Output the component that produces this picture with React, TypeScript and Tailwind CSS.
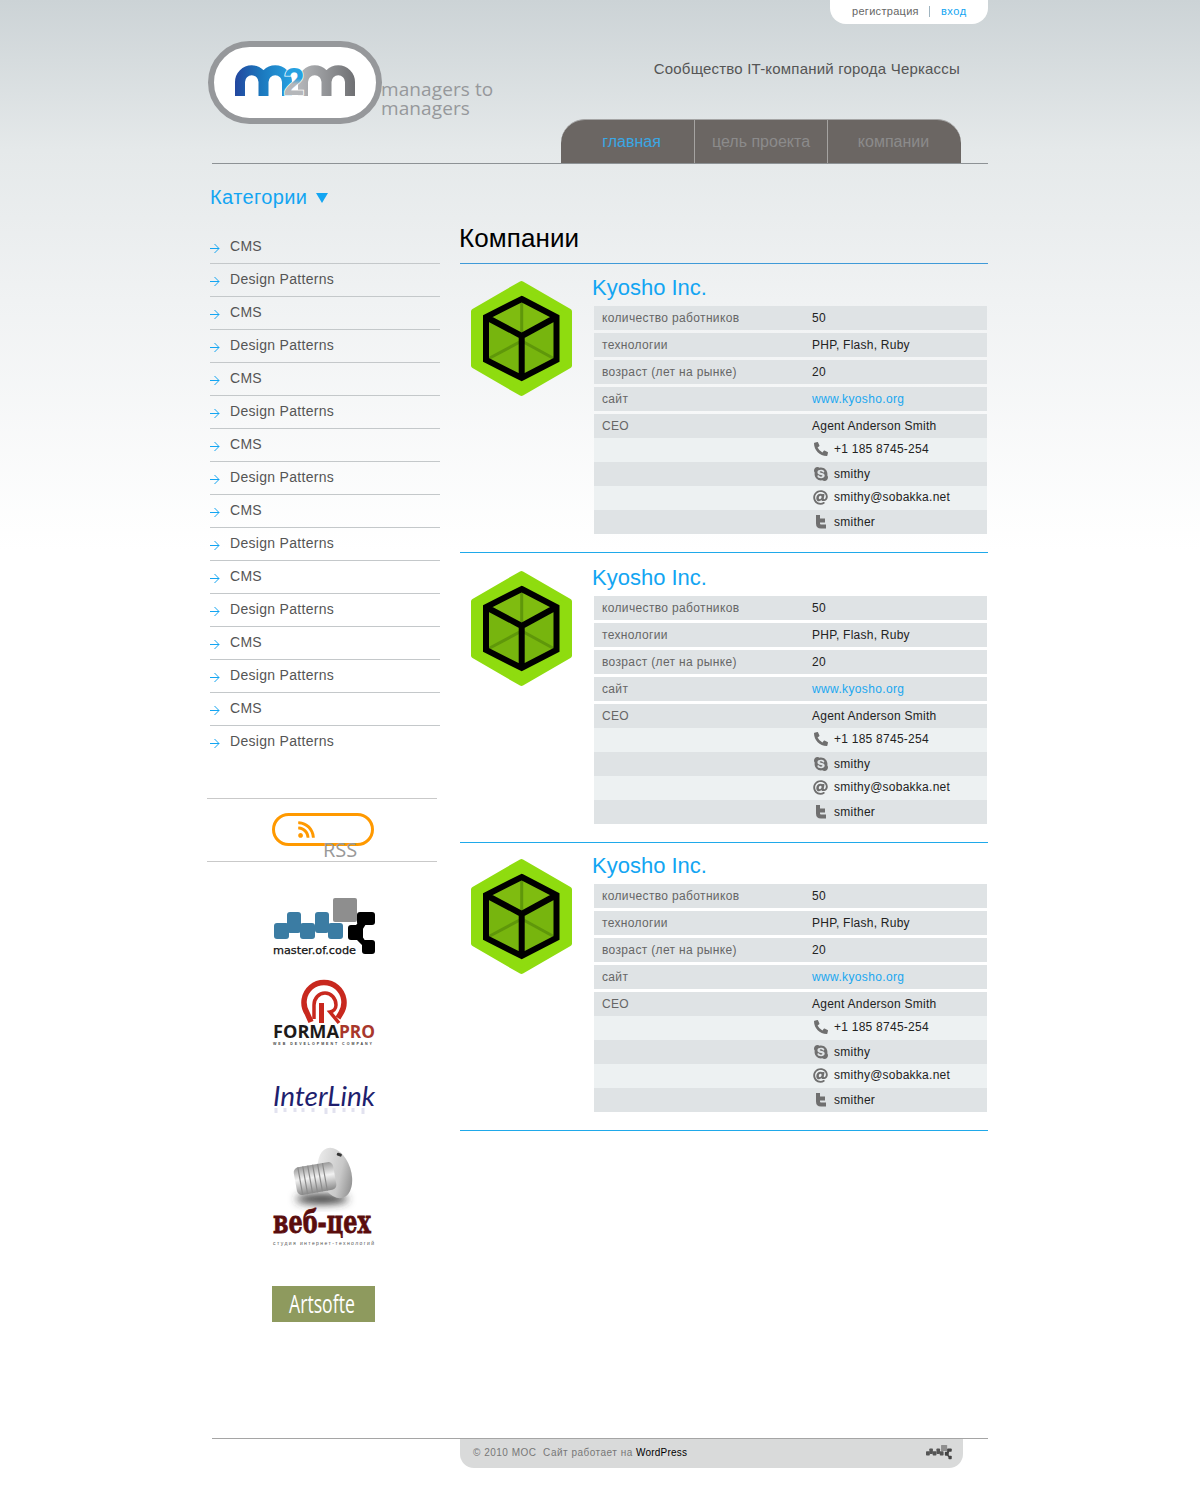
import { FaAt, FaPhoneAlt, FaRss, FaSkype } from "react-icons/fa";

const font = "font-['Liberation_Sans',Arial,sans-serif]";
const categories = Array.from({ length: 16 }, (_, i) => (i % 2 === 0 ? "CMS" : "Design Patterns"));

const M2mLogo = () => (
    <svg className="block" width="174" height="83" viewBox="208 41 174 83">
        <defs>
            <linearGradient id="m1" x1="235" x2="292" y1="0" y2="0" gradientUnits="userSpaceOnUse">
                <stop offset="0" stopColor="#23479f" />
                <stop offset="0.45" stopColor="#1b77bd" />
                <stop offset="1" stopColor="#27a0e0" />
            </linearGradient>
            <linearGradient id="m2" x1="298" x2="355" y1="0" y2="0" gradientUnits="userSpaceOnUse">
                <stop offset="0" stopColor="#b5b7ba" />
                <stop offset="1" stopColor="#6f7073" />
            </linearGradient>
            <linearGradient id="two" x1="0" x2="0" y1="0" y2="1">
                <stop offset="0.42" stopColor="#27a0e0" />
                <stop offset="0.55" stopColor="#b5b7ba" />
            </linearGradient>
        </defs>
        <rect x="211" y="44" width="168" height="77" rx="38.5" fill="#fff" stroke="#96989b" strokeWidth="6" />
        <path d="M240 96V82A11.75 11.75 0 0 1 263.5 82V96M263.5 82A11.75 11.75 0 0 1 287 82V96" fill="none" stroke="url(#m1)" strokeWidth="10" />
        <path d="M303 96V82A11.75 11.75 0 0 1 326.5 82V96M326.5 82A11.75 11.75 0 0 1 350 82V96" fill="none" stroke="url(#m2)" strokeWidth="10" />
        <text x="294" y="95" textAnchor="middle" fontFamily="Liberation Sans" fontWeight="700" fontSize="38" fill="url(#two)" stroke="#fff" strokeWidth="1.5" paintOrder="stroke">2</text>
    </svg>
);

const MasterLogo = ({ grey = false, width = 110, height = 65 }: { grey?: boolean; width?: number; height?: number }) => {
    const blue = grey ? "#555" : "#3b7ca3";
    const black = grey ? "#444" : "#000";
    return (
        <svg className="block" width={width} height={height} viewBox="270 895 110 65">
            <rect x="333" y="898" width="24" height="24" rx="2" fill="#8e8e8e" />
            <g fill={blue}>
                <rect x="274" y="923" width="15" height="16" rx="3" />
                <rect x="287" y="912" width="14" height="21" rx="3" />
                <rect x="300" y="923" width="15" height="16" rx="3" />
                <rect x="315" y="912" width="14" height="21" rx="3" />
                <rect x="328" y="923" width="15" height="16" rx="3" />
            </g>
            <g fill={black}>
                <rect x="357" y="912" width="18" height="13" rx="3" />
                <rect x="348" y="925" width="15" height="15" rx="3" />
                <rect x="362" y="940" width="13" height="14" rx="3" />
                <path d="M356 925L360 921L366 924L361 932ZM357 940L363 946L366 942L360 933Z" />
            </g>
            {!grey && (
                <text x="273" y="954" fontFamily="DejaVu Sans" fontSize="11" textLength="83" lengthAdjust="spacingAndGlyphs" fill="#111" stroke="#111" strokeWidth="0.25">master.of.code</text>
            )}
        </svg>
    );
};

const FormaLogo = () => (
    <svg className="block" width="110" height="70" viewBox="270 978 110 70">
        <path d="M311 1022L307 1013A20 20 0 1 1 341 1013L338 1018" fill="none" stroke="#c8281e" strokeWidth="5.5" />
        <path d="M314 1019V1005A11 12 0 0 1 336 1005A7 7 0 0 1 330 1012L339 1023" fill="none" stroke="#c8281e" strokeWidth="3.5" />
        <path d="M321.5 1023V1003" fill="none" stroke="#c8281e" strokeWidth="5" />
        <text x="273" y="1038" fontFamily="Open Sans" fontWeight="700" fontSize="18" textLength="66" lengthAdjust="spacingAndGlyphs" fill="#1d1a1a">FORMA</text>
        <text x="339" y="1038" fontFamily="Open Sans" fontWeight="700" fontSize="18" textLength="36" lengthAdjust="spacingAndGlyphs" fill="#a8372c">PRO</text>
        <text x="273" y="1045" fontFamily="Liberation Sans" fontWeight="700" fontSize="3.6" textLength="99" fill="#444">WEB DEVELOPMENT COMPANY</text>
    </svg>
);

const InterLinkLogo = () => (
    <svg className="block" width="110" height="38" viewBox="270 1080 110 38">
        <text x="273" y="1106" fontFamily="Lato" fontStyle="italic" fontSize="27" textLength="102" lengthAdjust="spacingAndGlyphs" fill="#1f1f6e">InterLink</text>
        <path d="M276 1108V1113M285 1108V1112M295 1108V1112M303 1108V1112M313 1108V1112M326 1108V1114M334 1108V1113M344 1108V1112M353 1108V1112M363 1108V1114" stroke="#e2e2ef" strokeWidth="3" />
    </svg>
);

const WebLogo = () => (
    <svg className="block" width="110" height="104" viewBox="270 1146 110 104">
        <defs>
            <linearGradient id="thread" x1="0" x2="0" y1="0" y2="1">
                <stop offset="0" stopColor="#9a9a9a" />
                <stop offset="0.45" stopColor="#f2f2f2" />
                <stop offset="1" stopColor="#8a8a8a" />
            </linearGradient>
            <linearGradient id="head" x1="0" x2="1" y1="0" y2="1">
                <stop offset="0" stopColor="#f4f4f4" />
                <stop offset="0.6" stopColor="#c8c8c8" />
                <stop offset="1" stopColor="#777" />
            </linearGradient>
            <filter id="blur" x="-30%" y="-80%" width="160%" height="260%">
                <feGaussianBlur stdDeviation="4" />
            </filter>
        </defs>
        <ellipse cx="322" cy="1199" rx="26" ry="5" fill="#333" filter="url(#blur)" />
        <ellipse cx="335" cy="1173" rx="16" ry="26" fill="url(#head)" transform="rotate(-18 335 1173)" />
        <g transform="rotate(-10 318 1178)">
            <rect x="295" y="1164" width="40" height="28" rx="5" fill="url(#thread)" />
            <path d="M300 1164V1192M305 1164V1192M310 1164V1192M315 1164V1192M320 1164V1192M325 1164V1192" stroke="#8c8c8c" strokeWidth="1.2" />
        </g>
        <rect x="337" y="1153" width="5" height="3" rx="1" fill="#333" transform="rotate(20 339 1154)" />
        <g transform="translate(273 1233) scale(0.72 1)">
            <text x="0" y="0" fontFamily="DejaVu Serif" fontWeight="700" fontSize="31" fill="#5a0d0d" stroke="#5a0d0d" strokeWidth="0.8">веб-цех</text>
        </g>
        <text x="273" y="1245" fontFamily="Liberation Sans" fontSize="5" textLength="101" fill="#555">студия интернет-технологий</text>
    </svg>
);

const ArtsofteLogo = () => (
    <svg className="block" width="110" height="40" viewBox="270 1284 110 40">
        <rect x="272" y="1286" width="103" height="36" fill="#8e9a5e" />
        <g transform="translate(289 1313) scale(0.68 1)">
            <text x="0" y="0" fontFamily="Open Sans" fontSize="26" fill="#fff">Artsofte</text>
        </g>
    </svg>
);

const CubeIcon = () => (
    <svg className="block" width="104" height="118" viewBox="470 280 104 118">
        <path d="M521.5 284L569 311.5V365.5L521.5 393L474 365.5V311.5Z" fill="#8fdc0f" stroke="#8fdc0f" strokeWidth="6" strokeLinejoin="round" />
        <path d="M521.7 299L556.5 317V360L521.7 378L486 360V317Z" fill="#77b50e" />
        <path d="M521.7 299L556.5 317L521.7 336L486 317Z" fill="#7fbc10" />
        <path d="M521.7 299V341M486 360L521.7 341L556.5 360" fill="none" stroke="#5f970a" strokeWidth="3" />
        <path d="M521.7 299L556.5 317V360L521.7 378L486 360V317ZM486 317L521.7 336L556.5 317M521.7 336V378" fill="none" stroke="#000" strokeWidth="6" strokeLinejoin="miter" />
    </svg>
);

const TwitterIcon = () => (
    <svg width="11" height="14" viewBox="0 0 11 14">
        <path d="M3 0V8.5Q3 11.5 6 11.5H11M3 5.5H10" fill="none" stroke="#6f6f6f" strokeWidth="4" />
    </svg>
);

const links = [
    { icon: <FaPhoneAlt size={14} className="text-[#6f6f6f]" />, text: "+1 185 8745-254", cls: "bg-[#edf1f2] pb-0.5" },
    { icon: <FaSkype size={16} className="text-[#6f6f6f]" />, text: "smithy", cls: "bg-[#dfe3e5]" },
    { icon: <FaAt size={15} className="text-[#6f6f6f]" />, text: "smithy@sobakka.net", cls: "bg-[#edf1f2] pb-0.5" },
    { icon: <TwitterIcon />, text: "smither", cls: "bg-[#dfe3e5]" },
];

const Row = ({ label, value, link }: { label: string; value: string; link?: boolean }) => (
    <div className="flex h-6 items-center bg-[#dfe3e5] text-xs">
        <div className="w-[218px] pl-2 tracking-[0.35px] text-[#666]">{label}</div>
        <div className={link ? "tracking-[0.35px] text-[#1aa7f0]" : "tracking-[0.25px] text-[#222]"}>{value}</div>
    </div>
);

const Company = ({ top }: { top: string }) => (
    <div className={`flex border-b border-[#1fa9ea] pb-[18px] ${top}`}>
        <div className="w-[132px] pl-[10px] pt-[7px]">
            <CubeIcon />
        </div>
        <div className="flex-1">
            <div className="h-[33px] text-[22px] leading-[30px] text-[#13a5f2]">Kyosho Inc.</div>
            <div className="ml-[2px] w-[393px]">
                <div className="flex flex-col gap-[3px] pb-[3px]">
                    <Row label="количество работников" value="50" />
                    <Row label="технологии" value="PHP, Flash, Ruby" />
                    <Row label="возраст (лет на рынке)" value="20" />
                    <Row label="сайт" value="www.kyosho.org" link />
                </div>
                <Row label="CEO" value="Agent Anderson Smith" />
                {links.map((item) => (
                    <div key={item.text} className={`flex h-6 items-center pl-[218px] text-xs tracking-[0.25px] text-[#222] ${item.cls}`}>
                        <div className="flex w-[22px] items-center justify-center pr-[5px]">{item.icon}</div>
                        {item.text}
                    </div>
                ))}
            </div>
        </div>
    </div>
);

export default function App() {
    return (
        <div className={`h-[1500px] overflow-hidden bg-[linear-gradient(#ccd3d6_0,#e5e9ea_150px,#f0f2f3_300px,#fff_550px)] ${font}`}>
            <div className="mx-auto w-[780px]">
                <header className="mx-[2px] h-[164px] border-b border-[#8d9295]">
                    <div className="flex justify-end">
                        <div className="flex h-6 w-[158px] items-center rounded-b-2xl bg-white pb-px pl-[22px] text-[11px] tracking-[0.3px] text-[#666]">
                            регистрация
                            <span className="ml-[10px] h-[11px] w-px bg-[#9fb4c0]" />
                            <span className="ml-[11px] tracking-[0.6px] text-[#13a5f2]">вход</span>
                        </div>
                    </div>
                    <div className="flex h-[139px]">
                        <div className="-ml-[4px] flex pt-[17px]">
                            <M2mLogo />
                            <div className="-ml-[1px] pt-[39px] font-['Open_Sans',sans-serif] text-[19px] leading-[19px] tracking-[0.1px] text-[#96989b]">
                                managers to
                                <br />
                                managers
                            </div>
                        </div>
                        <div className="flex flex-1 flex-col items-end pr-[27px]">
                            <div className="mt-[35px] pr-px text-[15px] leading-5 tracking-[0.2px] text-[#555]">Сообщество IT-компаний города Черкассы</div>
                            <nav className="mt-auto grid h-[44px] w-[400px] grid-cols-[134px_133px_133px] rounded-t-[24px] border-t border-[#a5a5a5] bg-[#6b6663] text-base text-[#8b8b8b]">
                                <div className="flex items-center justify-center border-r border-[#a5a3a1] pl-[8px] text-[#3aa7e4]">главная</div>
                                <div className="flex items-center justify-center border-r border-[#a5a3a1]">цель проекта</div>
                                <div className="flex items-center justify-center pr-[2px]">компании</div>
                            </nav>
                        </div>
                    </div>
                </header>

                <div className="flex gap-5">
                    <aside className="w-[230px] shrink-0">
                        <div className="mt-[19px] mb-5 flex h-7 items-center text-xl tracking-[0.4px] text-[#13a5f2]">
                            Категории
                            <svg className="ml-[9px] mt-0.5" width="12" height="10" viewBox="0 0 12 10">
                                <path d="M0 0H12L6 10Z" fill="#13a5f2" />
                            </svg>
                        </div>
                        <ul>
                            {categories.map((name, i) => (
                                <li key={i} className="flex h-[33px] items-center border-b border-[#c4c8ca] pb-0.5 text-sm tracking-[0.3px] text-[#555] last:border-transparent">
                                    <svg className="mr-[10px] mt-1" width="10" height="11" viewBox="0 0 10 11">
                                        <path d="M0 5.5H9M4.5 1L9 5.5L4.5 10" fill="none" stroke="#13a5f2" />
                                    </svg>
                                    {name}
                                </li>
                            ))}
                        </ul>
                        <div className="-ml-[3px] mt-[39px] h-[64px] w-[230px] border-y border-[#c9c9c9] pl-[65px] pt-[14px]">
                            <div className="relative flex h-[33px] w-[102px] items-center rounded-[17px] border-[3px] border-[#f90] pl-[22px]">
                                <FaRss size={19} className="text-[#f90]" />
                                <span className="absolute left-[48px] top-[22px] font-['Open_Sans',sans-serif] text-xl leading-6 text-[#999]">RSS</span>
                            </div>
                        </div>
                        <div className="pl-[60px]">
                            <div className="mt-[33px]"><MasterLogo /></div>
                            <div className="mt-[18px]"><FormaLogo /></div>
                            <div className="mt-[32px]"><InterLinkLogo /></div>
                            <div className="mt-[28px]"><WebLogo /></div>
                            <div className="mt-[34px]"><ArtsofteLogo /></div>
                        </div>
                    </aside>

                    <main className="w-[528px] pt-[60px]">
                        <h1 className="h-10 border-b border-[#3f9ad8] text-[26px] leading-7 tracking-[0.1px] text-black">
                            <span className="-ml-px">Компании</span>
                        </h1>
                        <Company top="pt-[9px]" />
                        <Company top="pt-[10px]" />
                        <Company top="pt-[8px]" />
                    </main>
                </div>

                <footer className="mx-[2px] mt-[114px] border-t border-[#a5a5a5] pl-[248px]">
                    <div className="flex h-[29px] w-[503px] items-center justify-between rounded-b-[14px] bg-[#d9dada] pb-[2px] pl-[13px] pr-[10px] text-[10px] tracking-[0.5px] text-[#777]">
                        <div>
                            © 2010 MOC&nbsp; Сайт работает на <span className="tracking-[0.2px] text-black">WordPress</span>
                        </div>
                        <MasterLogo grey width={28} height={17} />
                    </div>
                </footer>
            </div>
        </div>
    );
}
